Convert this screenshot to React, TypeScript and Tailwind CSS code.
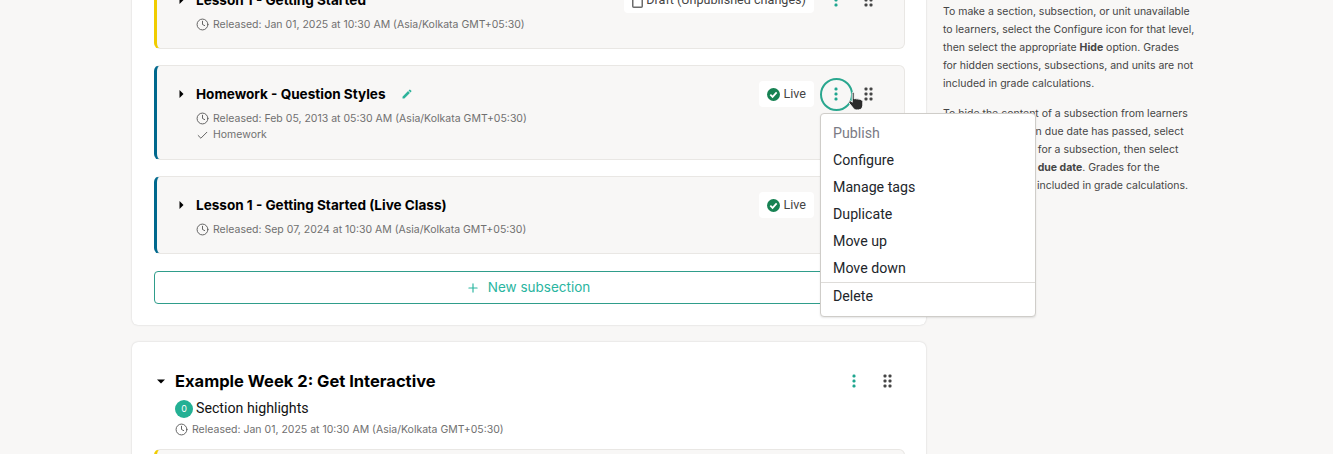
import { Check, Clock, Plus } from 'lucide-react'
import type { ReactNode } from 'react'

const inter = 'font-["Inter",sans-serif]'
const roboto = 'font-["Roboto",sans-serif]'

function Kebab() {
  return (
    <svg width="4" height="14" viewBox="0 0 4 14" className="fill-[#1fa68f]">
      <rect x="0.5" y="0.5" width="3" height="3" rx="1.2" />
      <rect x="0.5" y="5.5" width="3" height="3" rx="1.2" />
      <rect x="0.5" y="10.5" width="3" height="3" rx="1.2" />
    </svg>
  )
}

function DragHandle() {
  return (
    <svg width="9" height="14" viewBox="0 0 9 14" className="fill-[#454545]">
      {[0.5, 5.5, 10.5].map((y) => (
        <g key={y}>
          <rect x="0.5" y={y} width="3" height="3" rx="1" />
          <rect x="5.5" y={y} width="3" height="3" rx="1" />
        </g>
      ))}
    </svg>
  )
}

function CaretRight() {
  return (
    <svg width="5" height="8" viewBox="0 0 5 8" className="fill-black">
      <path d="M0.5 0 L4.5 4 L0.5 8 Z" />
    </svg>
  )
}

function Pencil() {
  return (
    <svg width="12" height="12" viewBox="0 0 24 24" className="fill-[#2eb39b]">
      <path d="M3 17.25V21h3.75L17.81 9.94l-3.75-3.75L3 17.25zM20.71 7.04a1 1 0 000-1.41l-2.34-2.34a1 1 0 00-1.41 0l-1.83 1.83 3.75 3.75 1.83-1.83z" />
    </svg>
  )
}

function LiveIcon() {
  return (
    <svg width="13" height="13" viewBox="0 0 14 14">
      <circle cx="7" cy="7" r="7" fill="#178253" />
      <path d="M3.6 7.2 L6 9.6 L10.4 4.8" fill="none" stroke="#fff" strokeWidth="1.9" />
    </svg>
  )
}

function DraftIcon() {
  return (
    <svg width="11" height="15" viewBox="0 0 11 15" fill="none" stroke="#6b6b6b" strokeWidth="1.5">
      <rect x="0.75" y="0.75" width="9.5" height="13.5" rx="1" />
    </svg>
  )
}

function HandCursor() {
  return (
    <svg width="17" height="21" viewBox="0 0 16 20" className="absolute left-[26px] top-[11px]">
      <path
        d="M4 1.5c.8-.6 1.8 0 1.8 1v5l.6-.2c.7-.2 1.5 0 1.9.3.7-.3 1.6-.2 2 .3.7-.3 1.7 0 2.1.6.9 0 1.6.7 1.6 1.6v3.4c0 2.5-1.6 4.5-4.2 4.5H8c-1.4 0-2.2-.6-3-1.6L1 11.5c-.5-.7-.3-1.5.3-1.9.6-.4 1.4-.2 1.9.3l.7.8V2.5z"
        fill="#2b2b2b"
        stroke="#fff"
        strokeWidth="0.9"
      />
    </svg>
  )
}

function Released({ date }: { date: string }) {
  return (
    <div className="flex items-center gap-[4px] text-[10.5px] leading-[16px] text-[#707070]">
      <Clock size={13} strokeWidth={1.75} className="-mt-[1px] text-[#5c5c5c]" />
      <span>Released: {date} (Asia/Kolkata GMT+05:30)</span>
    </div>
  )
}

function StatusBadge({ icon, label }: { icon: ReactNode; label: string }) {
  return (
    <div className={`flex h-[26px] items-center gap-[3px] rounded-[4px] bg-white pl-[8px] pr-[8px] text-[12.6px] text-[#454545] ${roboto}`}>
      {icon}
      <span>{label}</span>
    </div>
  )
}

function ActionMenu() {
  const items = ['Configure', 'Manage tags', 'Duplicate', 'Move up', 'Move down']
  return (
    <div className={`absolute left-[-2px] top-[33px] z-10 h-[204px] w-[216px] rounded-[4px] border border-[#cfcdc9] bg-white pt-[7px] text-[14.2px] text-[#22262b] shadow-[0_1px_2px_rgba(0,0,0,0.1)] ${roboto}`}>
      <div className="flex h-[27px] items-center px-[12px] text-[#7b7b85]">Publish</div>
      {items.map((item) => (
        <div key={item} className="flex h-[27px] items-center px-[12px]">
          {item}
        </div>
      ))}
      <div className="-mt-[1px] flex h-[29px] items-center border-t border-[#dedcd9] px-[12px]">Delete</div>
    </div>
  )
}

function SubsectionCard({
  title,
  accent,
  badge,
  pencil,
  active,
  children,
}: {
  title: string
  accent: string
  badge: ReactNode
  pencil?: boolean
  active?: boolean
  children: ReactNode
}) {
  return (
    <div className={`rounded-[6px] border border-[#e9e7e4] border-l-0 bg-[#f8f7f6] pb-[15px] pt-[15px] ${accent}`}>
      <div className="flex h-[26px] items-center justify-between pl-[22px] pr-[20px]">
        <div className="flex items-center">
          <CaretRight />
          <span className="ml-[12px] text-[13.55px] font-bold text-black">{title}</span>
          {pencil && (
            <span className="ml-[15px]">
              <Pencil />
            </span>
          )}
        </div>
        <div className="flex items-center">
          {badge}
          <div
            className={`relative ml-[6px] flex h-[33px] w-[33px] items-center justify-center rounded-full pr-[1px] ${active ? 'border-2 border-[#2aa78f]' : ''}`}
          >
            <Kebab />
            {active && (
              <>
                <HandCursor />
                <ActionMenu />
              </>
            )}
          </div>
          <div className="flex w-[31px] justify-center">
            <DragHandle />
          </div>
        </div>
      </div>
      <div className="pl-[39px] pt-[4px]">{children}</div>
    </div>
  )
}

function SectionOne() {
  return (
    <div className="-mt-[29px] rounded-[6px] bg-white pb-[21px] pl-[22px] pr-[21px] shadow-[0_0_2px_rgba(0,0,0,0.18)]">
      <div className="flex flex-col gap-[16px]">
        <SubsectionCard
          title="Lesson 1 - Getting Started"
          accent="border-l-[3px] border-l-[#f0cc00]"
          badge={<StatusBadge icon={<DraftIcon />} label="Draft (Unpublished changes)" />}
        >
          <Released date="Jan 01, 2025 at 10:30 AM" />
        </SubsectionCard>
        <SubsectionCard
          title="Homework - Question Styles"
          accent="border-l-[3px] border-l-[#00688d]"
          badge={<StatusBadge icon={<LiveIcon />} label="Live" />}
          pencil
          active
        >
          <Released date="Feb 05, 2013 at 05:30 AM" />
          <div className="flex items-center gap-[4px] pb-[1px] text-[10.5px] leading-[16px] text-[#707070]">
            <Check size={13} strokeWidth={1.75} className="text-[#5c5c5c]" />
            <span>Homework</span>
          </div>
        </SubsectionCard>
        <SubsectionCard
          title="Lesson 1 - Getting Started (Live Class)"
          accent="border-l-[3px] border-l-[#00688d]"
          badge={<StatusBadge icon={<LiveIcon />} label="Live" />}
        >
          <Released date="Sep 07, 2024 at 10:30 AM" />
        </SubsectionCard>
      </div>
      <button className="mt-[17px] flex h-[33px] w-full items-center justify-center gap-[8px] rounded-[4px] border border-[#2f9d8b] bg-white pr-[3px] text-[13.5px] text-[#2ab5a0]">
        <Plus size={14} strokeWidth={2} />
        <span>New subsection</span>
      </button>
    </div>
  )
}

function SectionTwo() {
  return (
    <div className="mt-[17px] rounded-[6px] bg-white pl-[22px] pr-[21px] pt-[26px] shadow-[0_0_2px_rgba(0,0,0,0.18)]">
      <div className="flex h-[26px] items-center justify-between pr-[13px]">
        <div className="flex items-center">
          <svg width="8" height="5" viewBox="0 0 8 5" className="ml-[3px] fill-black">
            <path d="M0 0.5 L8 0.5 L4 4.5 Z" />
          </svg>
          <span className="ml-[10px] text-[16.5px] font-bold text-black">Example Week 2: Get Interactive</span>
        </div>
        <div className="flex items-center gap-[27px]">
          <Kebab />
          <DragHandle />
        </div>
      </div>
      <div className="pl-[21px]">
        <div className={`mt-[2px] flex h-[26px] items-center gap-[3px] text-[14.2px] text-[#111] ${roboto}`}>
          <span className={`flex h-[18px] w-[18px] items-center justify-center rounded-full bg-[#24b094] text-[9px] text-white ${inter}`}>0</span>
          <span>Section highlights</span>
        </div>
        <Released date="Jan 01, 2025 at 10:30 AM" />
      </div>
      <div className="mt-[11px] h-[20px] rounded-[6px] border border-[#e9e7e4] border-l-[3px] border-l-[#f0cc00] bg-[#f8f7f6]" />
    </div>
  )
}

export default function App() {
  return (
    <div className={`h-[454px] overflow-hidden bg-[#f8f7f6] pl-[132px] ${inter}`}>
      <div className="flex items-start">
        <div className="w-[794px]">
          <SectionOne />
          <SectionTwo />
        </div>
        <aside className="ml-[17px] w-[251.6px] pt-[3px] text-[10.5px] leading-[18px] text-[#454545]">
          <p>
            To make a section, subsection, or unit unavailable to learners, select the Configure icon for that level,
            then select the appropriate <b>Hide</b> option. Grades for hidden sections, subsections, and units are not
            included in grade calculations.
          </p>
          <p className="mt-[12px]">
            To hide the content of a subsection from learners after the subsection due date has passed, select the
            Configure icon for a subsection, then select <b>Hide content after due date</b>. Grades for the subsection
            remain included in grade calculations.
          </p>
        </aside>
      </div>
    </div>
  )
}
